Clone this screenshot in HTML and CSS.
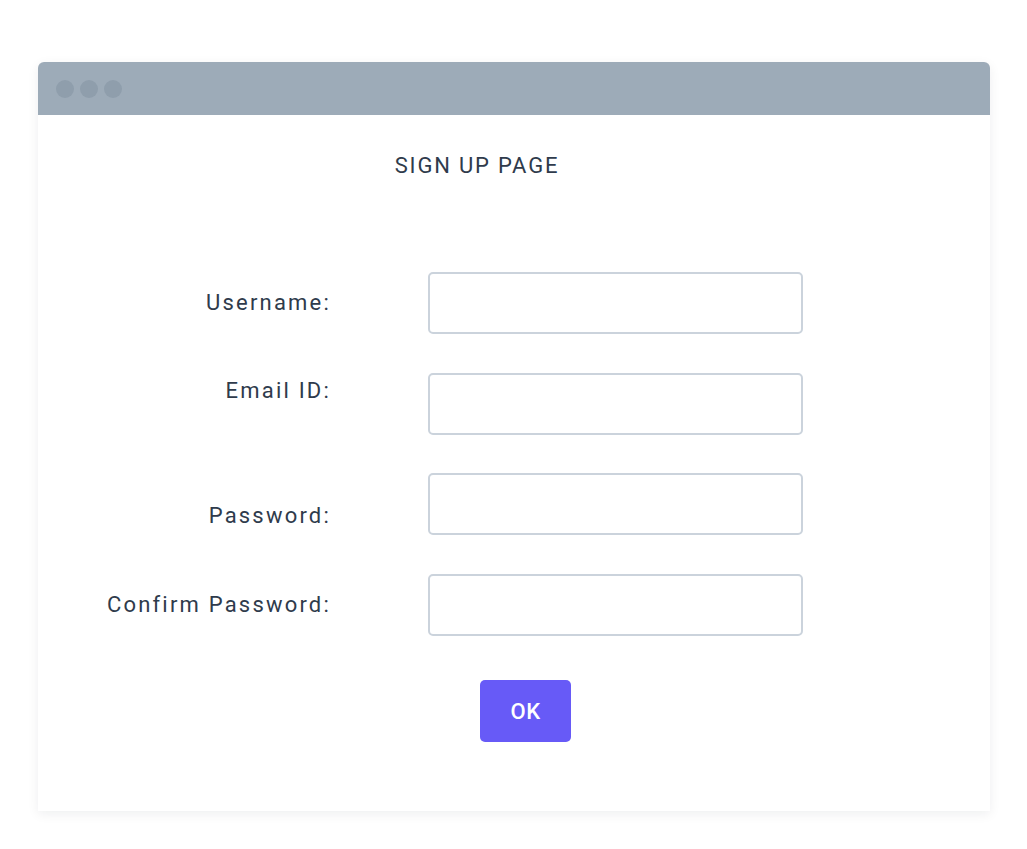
FILE: index.html
```html
<!DOCTYPE html>
<html lang="en">
<head>
<meta charset="utf-8">
<title>Sign Up</title>
<link rel="stylesheet" href="styles.css">
</head>
<body>
<div class="page">
  <div class="window">
    <div class="titlebar">
      <span class="dot"></span><span class="dot"></span><span class="dot"></span>
    </div>
    <div class="content">
      <h1 class="title">SIGN UP PAGE</h1>
      <form class="form">
        <label class="label" for="u">Username:</label>
        <input class="field" id="u" type="text">
        <label class="label label--up" for="e">Email ID:</label>
        <input class="field" id="e" type="text">
        <label class="label label--down" for="p">Password:</label>
        <input class="field" id="p" type="password">
        <label class="label" for="c">Confirm Password:</label>
        <input class="field" id="c" type="password">
        <button class="ok" type="button">OK</button>
      </form>
    </div>
  </div>
</div>
</body>
</html>
```
FILE: styles.css
```css
html, body {
  margin: 0;
  padding: 0;
  background: #ffffff;
}
body {
  font-family: Roboto, "Liberation Sans", sans-serif;
  color: #2f3b4c;
}
.page {
  padding: 62px 37px 38px 38px;
}
.window {
  width: 952px;
  height: 749px;
  background: #ffffff;
  border-radius: 6px 6px 0 0;
  box-shadow: 0 3px 12px rgba(15, 23, 42, 0.07);
  display: flex;
  flex-direction: column;
}
.titlebar {
  height: 53px;
  background: #9dabb8;
  border-radius: 6px 6px 0 0;
  display: flex;
  align-items: center;
  gap: 6px;
  padding-left: 18px;
}
.dot {
  width: 18px;
  height: 18px;
  border-radius: 50%;
  background: #8f9eac;
}
.content {
  padding-top: 36px;
}
.title {
  margin: 0;
  font-size: 22px;
  font-weight: 400;
  line-height: 30px;
  letter-spacing: 1.8px;
  text-align: center;
  padding-right: 74px;
  color: #2f3b4c;
}
.form {
  margin-top: 91px;
  display: grid;
  grid-template-columns: 293px 375px;
  grid-auto-rows: 62px;
  column-gap: 97px;
  row-gap: 38.5px;
}
.label {
  justify-self: end;
  align-self: center;
  font-size: 22px;
  line-height: 30px;
  letter-spacing: 2.2px;
  color: #2f3b4c;
}
.label--up {
  margin-bottom: 26px;
}
.label--down {
  margin-top: 24px;
}
.field {
  box-sizing: border-box;
  width: 375px;
  height: 62px;
  border: 2px solid #cbd3dc;
  border-radius: 5px;
  background: #fff;
  margin: 0;
  font: inherit;
}
.ok {
  grid-column: 2;
  justify-self: start;
  margin-left: 52px;
  margin-top: 6px;
  width: 91px;
  height: 62px;
  border: none;
  border-radius: 5px;
  background: #675af7;
  color: #ffffff;
  font-family: Roboto, "Liberation Sans", sans-serif;
  font-size: 22px;
  font-weight: 500;
  letter-spacing: 0.5px;
}
```
